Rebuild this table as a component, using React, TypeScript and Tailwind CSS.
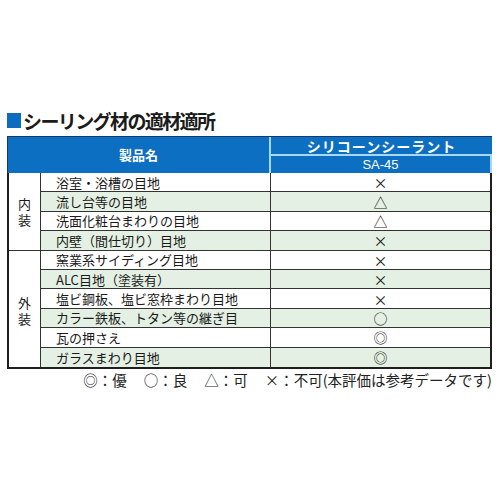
const rows = [
  { name: '浴室・浴槽の目地', mark: '×' },
  { name: '流し台等の目地', mark: '△' },
  { name: '洗面化粧台まわりの目地', mark: '△' },
  { name: '内壁（間仕切り）目地', mark: '×' },
  { name: '窯業系サイディング目地', mark: '×' },
  { name: 'ALC目地（塗装有）', mark: '×' },
  { name: '塩ビ鋼板、塩ビ窓枠まわり目地', mark: '×' },
  { name: 'カラー鉄板、トタン等の継ぎ目', mark: '○' },
  { name: '瓦の押さえ', mark: '◎' },
  { name: 'ガラスまわり目地', mark: '◎' },
]

const sans = "font-['Noto_Sans_CJK_JP','Noto_Sans',sans-serif]"

export default function App() {
  return (
    <div className={`w-[500px] h-[500px] bg-white ${sans} text-[#1a1a1a]`}>
      <div className="pl-[7px] pt-[108px]">
        <h1 className="flex items-center gap-[2px] h-[24px] text-[19px] font-bold tracking-[-1.6px] leading-none text-[#1b1b1b]">
          <span className="inline-block w-[14px] h-[15px] bg-[#0b6cc0]" />
          シーリング材の適材適所
        </h1>

        <div className="mt-[4px] w-[485px]">
          {/* header */}
          <div className="flex h-[37px] bg-[#0d6fc2] border-t border-l border-[#163a66] text-white">
            <div className="w-[261px] flex items-center justify-center text-[13px] font-bold">製品名</div>
            <div className="w-[2px] bg-[#a6d8f4]" />
            <div className="flex-1 flex flex-col">
              <div className="h-[17px] flex items-center justify-center text-[14px] font-bold tracking-[1px] leading-none">
                シリコーンシーラント
              </div>
              <div className="h-[2px] bg-[#a6d8f4]" />
              <div className="flex-1 flex items-center justify-center text-[13px] leading-none border-r-2 border-[#a6d8f4] font-['Liberation_Sans',sans-serif]">
                SA-45
              </div>
            </div>
          </div>

          {/* body */}
          <div className="grid grid-cols-[32px_230px_1fr] grid-rows-[repeat(10,19.4px)] border-l-2 border-r-2 border-b-2 border-[#1e1e1e]">
            <div className="row-span-4 flex flex-col items-center justify-center border-r border-b border-[#333] text-[13px] bg-white pt-[2px]">
              <span className="block h-[16px] leading-[16px]">内</span>
              <span className="block h-[16px] leading-[16px]">装</span>
            </div>
            {rows.slice(0, 4).map((r, i) => (
              <Row key={r.name} name={r.name} mark={r.mark} shaded={i % 2 === 1} last={false} />
            ))}
            <div className="row-span-6 flex flex-col items-center justify-center border-r border-[#333] text-[13px] bg-white pt-[5px]">
              <span className="block h-[16px] leading-[16px]">外</span>
              <span className="block h-[16px] leading-[16px]">装</span>
            </div>
            {rows.slice(4).map((r, i) => (
              <Row key={r.name} name={r.name} mark={r.mark} shaded={i % 2 === 1} last={i === 5} />
            ))}
          </div>

          <div className="mt-[2px] flex justify-end gap-[17px] text-[14.5px] leading-[18px] text-[#222] whitespace-nowrap">
            <span>◎：優</span>
            <span>○：良</span>
            <span>△：可</span>
            <span>×：不可(本評価は参考データです)</span>
          </div>
        </div>
      </div>
    </div>
  )
}

function Row({ name, mark, shaded, last }: { name: string; mark: string; shaded: boolean; last: boolean }) {
  const bg = shaded ? 'bg-[#e3f0e3]' : 'bg-white'
  const border = last ? '' : 'border-b border-[#333]'
  return (
    <>
      <div className={`${bg} ${border} border-r border-[#333] flex items-center pl-[15px] text-[13px] leading-none whitespace-nowrap`}>
        {name}
      </div>
      <div className={`${bg} ${border} flex items-center justify-center text-[14px] leading-none`}>{mark}</div>
    </>
  )
}
